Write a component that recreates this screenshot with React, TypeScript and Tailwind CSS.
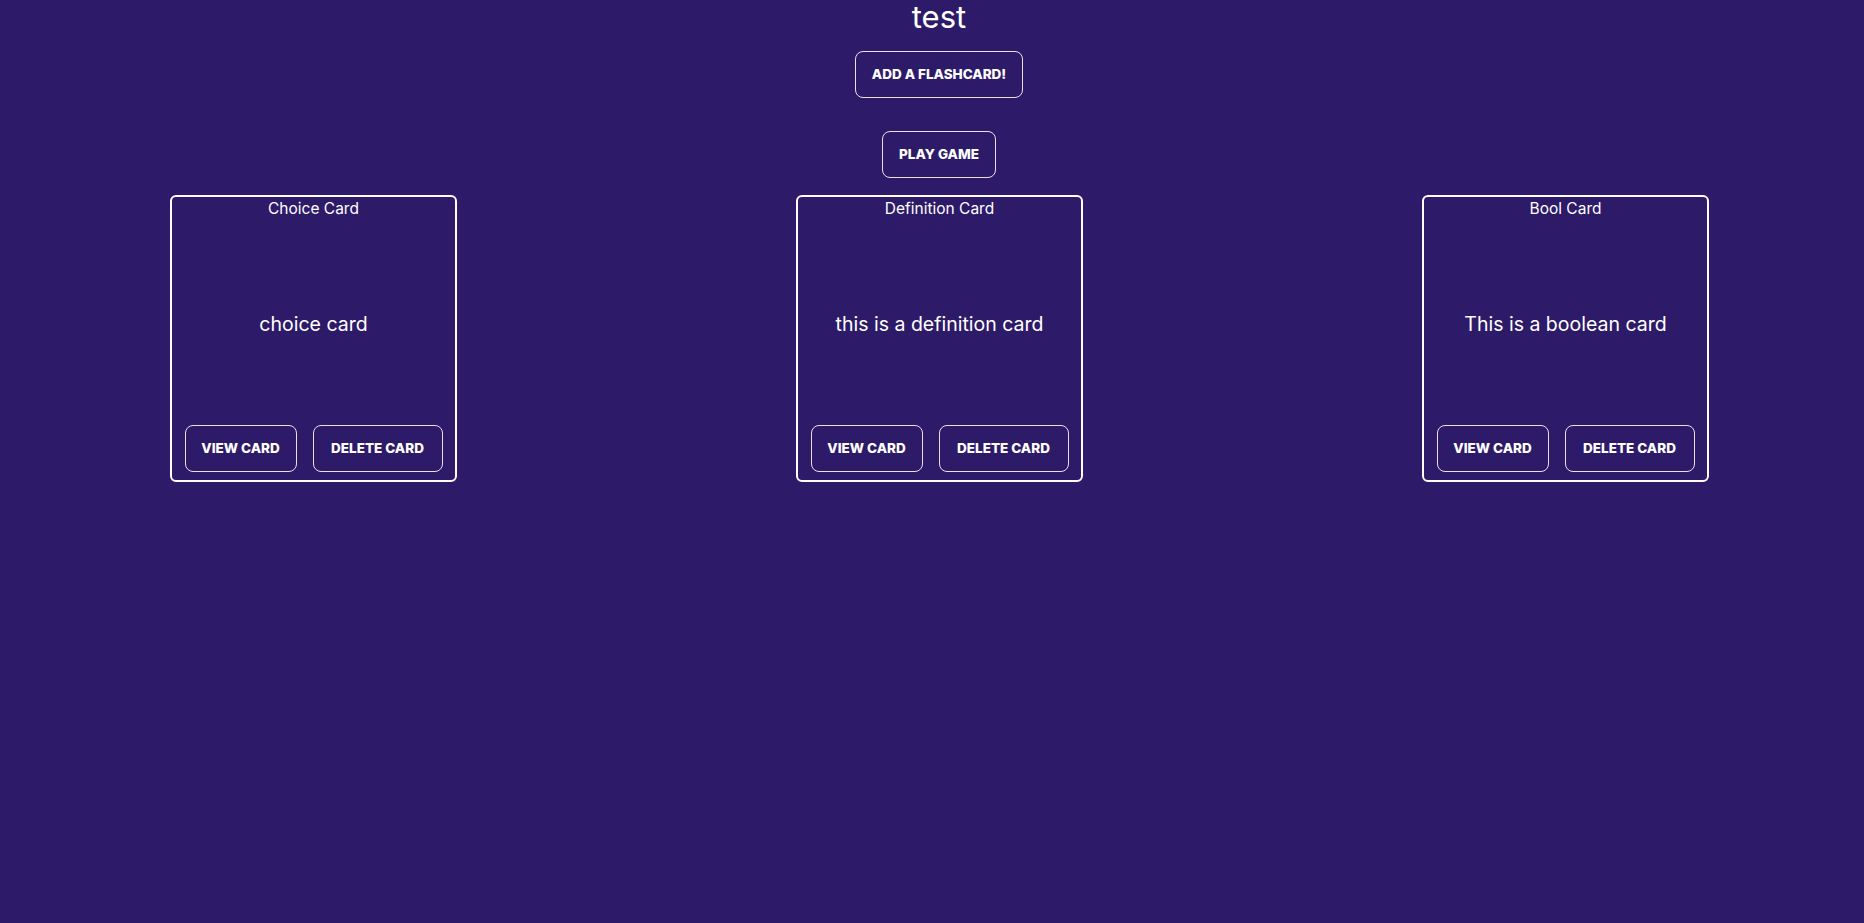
import React from "react";

const cards = [
  { title: "Choice Card", body: "choice card" },
  { title: "Definition Card", body: "this is a definition card" },
  { title: "Bool Card", body: "This is a boolean card" },
];

function Btn({ label, w }: { label: string; w: string }) {
  return (
    <button
      className={`${w} h-[47px] rounded-[8px] border border-[#e6e3f0] bg-transparent text-white text-[13.5px] font-extrabold uppercase flex items-center justify-center`}
    >
      {label}
    </button>
  );
}

export default function App() {
  return (
    <div
      className="min-h-[923px] w-full bg-[#2d1b69] text-white flex flex-col items-center pl-[14px]"
      style={{ fontFamily: "Inter, 'Noto Sans', sans-serif" }}
    >
      <h1 className="h-[34px] leading-[33px] text-[31px] font-normal">test</h1>
      <div className="mt-[17px]">
        <Btn label="Add a flashcard!" w="w-[168px]" />
      </div>
      <div className="mt-[33px]">
        <Btn label="Play game" w="w-[114px]" />
      </div>
      <div className="mt-[17px] w-full flex pl-[156px] gap-[339px]">
        {cards.map((c) => (
          <div
            key={c.title}
            className="w-[287px] h-[287px] shrink-0 border-2 border-white rounded-[6px] flex flex-col"
          >
            <div className="h-[23px] leading-[23px] text-center text-[15.5px]">{c.title}</div>
            <div className="flex-1 flex items-center justify-center text-[19.5px] pt-[4px]">
              {c.body}
            </div>
            <div className="flex justify-center gap-[16px] pb-[8px]">
              <Btn label="View card" w="w-[112px]" />
              <Btn label="Delete card" w="w-[130px]" />
            </div>
          </div>
        ))}
      </div>
    </div>
  );
}
